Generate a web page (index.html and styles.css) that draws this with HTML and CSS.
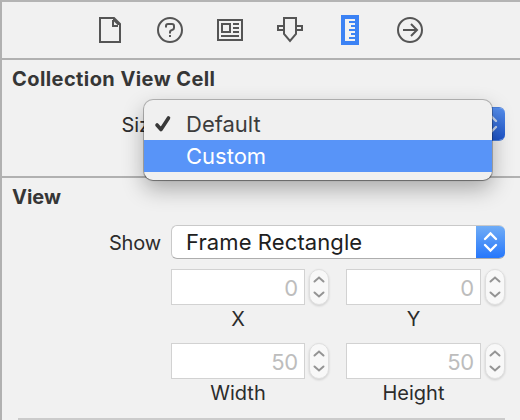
FILE: index.html
```html
<!DOCTYPE html>
<html lang="en">
<head>
<meta charset="utf-8">
<title>Size Inspector</title>
<link rel="stylesheet" href="styles.css">
</head>
<body>
<main class="inspector">
  <nav class="tabs">
    <svg class="icon" width="30" height="30" viewBox="0 0 30 30"><path d="M5 3h14l6 6v18H5zM18 5v6h5M19 3v2l4 4h2"/></svg>
    <svg class="icon" width="30" height="30" viewBox="0 0 30 30"><circle cx="15" cy="15" r="12"/><path d="M11 12.500V11q0-2 2-2h4q2 0 2 2v2q0 1.500-2 2-2 .5-2 2v1.500"/><path d="M15 20v2"/></svg>
    <svg class="icon" width="30" height="30" viewBox="0 0 30 30"><path d="M3 5h24v20H3zM7 9h8v8H7zM18 9h6M18 13h6M18 17h6M6 21h18"/></svg>
    <svg class="icon" width="30" height="30" viewBox="0 0 30 30"><path d="M9 3h12v16l-6 7-6-7zM9 11H3v4h6M21 11h6v4h-6"/></svg>
    <svg class="icon icon-active" width="30" height="30" viewBox="0 0 30 30"><path class="ruler" d="M6 0h18v30H6z"/><path class="scale" d="M10 4h10v2h-6v2h6v2h-4v2h4v2h-6v2h6v2h-4v2h4v2h-6v2h6v2H10z"/></svg>
    <svg class="icon" width="30" height="30" viewBox="0 0 30 30"><circle cx="15" cy="15" r="12"/><path d="M8 15h14M16 9l6 6-6 6"/></svg>
  </nav>

  <section class="section cell-section">
    <h2 class="heading heading-cell">Collection View Cell</h2>
    <div class="row">
      <span class="label">Size</span>
      <div class="popup popup-pressed"><span class="popup-value"></span><span class="popup-arrows"><svg width="29" height="34" viewBox="0 0 29 34"><path d="M9 14l5.500-5.500L20 14M9 20l5.500 5.500L20 20"/></svg></span></div>
    </div>
    <div class="menu">
      <div class="menu-item"><svg class="check" width="18" height="18" viewBox="0 0 18 18"><path d="M3 10l4 4.500L14.500 3"/></svg><span class="menu-text">Default</span></div>
      <div class="menu-item menu-item-selected"><span class="check"></span><span class="menu-text custom-text">Custom</span></div>
    </div>
  </section>

  <section class="section view-section">
    <h2 class="heading">View</h2>
    <div class="row">
      <span class="label">Show</span>
      <div class="popup"><span class="popup-value">Frame Rectangle</span><span class="popup-arrows"><svg width="29" height="34" viewBox="0 0 29 34"><path d="M9 14l5.500-5.500L20 14M9 20l5.500 5.500L20 20"/></svg></span></div>
    </div>
    <div class="fields">
      <div class="field"><div class="input">0</div><svg class="stepper" width="20" height="36" viewBox="0 0 20 36"><rect x=".5" y=".5" width="19" height="35" rx="9.500"/><path d="M5.500 12.500L10 8.500l4.500 4M5.500 23.500l4.500 4 4.500-4"/></svg><span class="caption">X</span></div>
      <div class="field"><div class="input">0</div><svg class="stepper" width="20" height="36" viewBox="0 0 20 36"><rect x=".5" y=".5" width="19" height="35" rx="9.500"/><path d="M5.500 12.500L10 8.500l4.500 4M5.500 23.500l4.500 4 4.500-4"/></svg><span class="caption">Y</span></div>
      <div class="field"><div class="input">50</div><svg class="stepper" width="20" height="36" viewBox="0 0 20 36"><rect x=".5" y=".5" width="19" height="35" rx="9.500"/><path d="M5.500 12.500L10 8.500l4.500 4M5.500 23.500l4.500 4 4.500-4"/></svg><span class="caption">Width</span></div>
      <div class="field"><div class="input">50</div><svg class="stepper" width="20" height="36" viewBox="0 0 20 36"><rect x=".5" y=".5" width="19" height="35" rx="9.500"/><path d="M5.500 12.500L10 8.500l4.500 4M5.500 23.500l4.500 4 4.500-4"/></svg><span class="caption">Height</span></div>
    </div>
    <div class="divider"></div>
  </section>
</main>
</body>
</html>
```
FILE: styles.css
```css
* { box-sizing: border-box; }
body {
  margin: 0;
  background: #f1f1f1;
  color: #2c2c2c;
  font: 20px/24px Inter, Roboto, sans-serif;
}
.inspector {
  height: 420px;
  overflow: hidden;
  border-top: 2px solid #b4b4b4;
  border-left: 2px solid #b1b1b1;
}
.tabs {
  display: flex;
  gap: 30px;
  height: 58px;
  padding: 13px 0 0 93px;
  border-bottom: 2px solid #b1b1b1;
}
.icon { fill: none; stroke: #555; stroke-width: 2; }
.icon-active { stroke: none; }
.ruler { fill: #3b82f4; }
.scale { fill: #f1f1f1; }
.section { position: relative; }
.cell-section { height: 118px; border-bottom: 2px solid #b1b1b1; }
.view-section { height: 242px; }
.heading {
  margin: 0;
  padding: 7px 0 0 10px;
  height: 47px;
  font-size: 20px;
  line-height: 24px;
  font-weight: 700;
  color: #363636;
}
.heading-cell { letter-spacing: .42px; }
.row { display: flex; gap: 10px; height: 34px; }
.label { width: 159px; line-height: 36px; text-align: right; letter-spacing: -.15px; }
.popup {
  display: flex;
  width: 334px;
  height: 34px;
  overflow: hidden;
  border: 1px solid #c9c9c9;
  border-bottom-color: #adadad;
  border-right: 0;
  border-radius: 6px;
  background: #fff;
}
.popup-value {
  flex: 1;
  padding-left: 14px;
  font-size: 22px;
  line-height: 33px;
  letter-spacing: .1px;
  color: #202020;
}
.popup-arrows {
  width: 29px;
  height: 34px;
  margin-top: -1px;
  background: linear-gradient(#72aef6, #2677fb);
  border-bottom: 1px solid #1d61e6;
}
.popup-arrows svg { display: block; fill: none; stroke: #fff; stroke-width: 2.4; stroke-linecap: round; }
.popup-pressed { border-color: #4a7fdc; }
.popup-pressed .popup-arrows { background: linear-gradient(#5790ee, #1e55cb); }
.popup-pressed svg { stroke: #cbdaf3; }
.menu {
  position: absolute;
  z-index: 1;
  top: 40px;
  left: 142px;
  width: 348px;
  height: 80px;
  padding: 8px 0;
  border-radius: 9px;
  background: #f0f0f0;
  box-shadow: 0 0 0 1px rgba(0,0,0,.24), 0 1px 1px rgba(0,0,0,.25), 0 9px 22px rgba(0,0,0,.3);
}
.menu-item { display: flex; align-items: center; height: 32px; padding-left: 10px; }
.menu-item-selected { background: #5894f8; }
.check { width: 18px; height: 18px; margin-right: 14px; fill: none; stroke: #393939; stroke-width: 3.6; stroke-linecap: round; stroke-linejoin: round; }
.menu-text { padding-bottom: 1px; font-size: 22px; color: #3c3c3c; }
.custom-text { color: #fff; }
.fields {
  display: grid;
  grid-template-columns: 158px 159px;
  grid-template-rows: 64px 64px;
  gap: 10px 17px;
  margin: 10px 0 0 169px;
}
.field { display: grid; grid-template-columns: 1fr 20px; grid-template-rows: 36px 24px; column-gap: 4px; }
.input {
  padding-right: 6px;
  border: 1px solid #d2d2d2;
  background: #fff;
  color: #bdbdbd;
  font-size: 22px;
  line-height: 36px;
  text-align: right;
  letter-spacing: -.2px;
}
.stepper { overflow: visible; filter: drop-shadow(0 1px 1px rgba(0,0,0,.15)); }
.stepper rect { fill: #f8f8f8; stroke: #dedede; }
.stepper path { fill: none; stroke: #949494; stroke-width: 2; stroke-linecap: round; }
.caption { padding-top: 2px; text-align: center; }
.divider { width: 487px; height: 2px; margin: 11px 0 0 16px; background: #cbcbcb; }
```
